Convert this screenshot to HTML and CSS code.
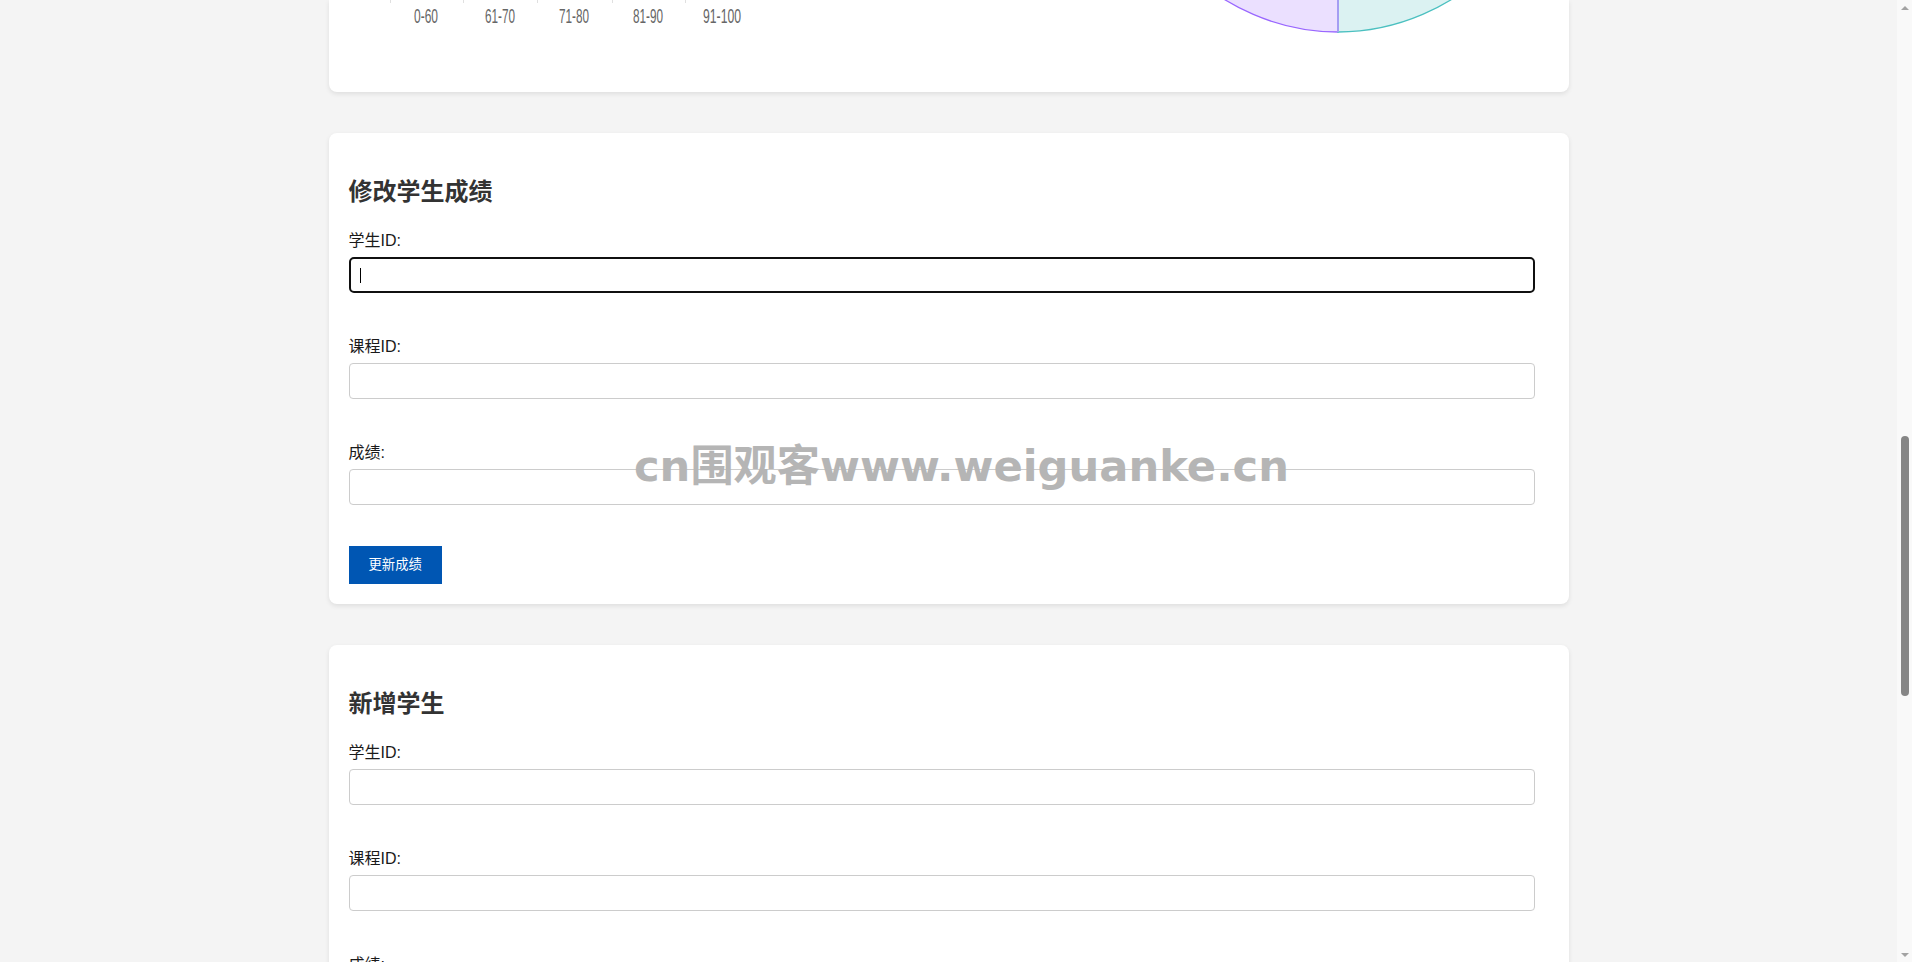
FILE: index.html
```html
<!DOCTYPE html>
<html lang="zh-CN">
<head>
<meta charset="utf-8">
<title>学生成绩管理</title>
<link rel="stylesheet" href="styles.css">
</head>
<body>
<div class="viewport">
  <main class="page">
    <section class="card card-chart">
      <svg class="chart" width="1200" height="92" viewBox="0 0 1200 92">
        <g class="ticks" stroke="rgba(0,0,0,0.12)" stroke-width="1">
          <line x1="41.5" y1="0" x2="41.5" y2="3"/>
          <line x1="114.5" y1="0" x2="114.5" y2="3"/>
          <line x1="188.5" y1="0" x2="188.5" y2="3"/>
          <line x1="263.5" y1="0" x2="263.5" y2="3"/>
          <line x1="336.5" y1="0" x2="336.5" y2="3"/>
        </g>
        <g class="axis-labels" fill="#666" font-family="Liberation Sans, Arial, sans-serif" font-size="19.5" text-anchor="middle">
          <text x="77" y="23" textLength="24" lengthAdjust="spacingAndGlyphs">0-60</text>
          <text x="151" y="23" textLength="30" lengthAdjust="spacingAndGlyphs">61-70</text>
          <text x="225" y="23" textLength="30" lengthAdjust="spacingAndGlyphs">71-80</text>
          <text x="299" y="23" textLength="30" lengthAdjust="spacingAndGlyphs">81-90</text>
          <text x="373" y="23" textLength="38" lengthAdjust="spacingAndGlyphs">91-100</text>
        </g>
        <g class="pie">
          <path d="M989 -218 L989 32 A230 250 0 0 1 759 -218 Z" fill="rgba(153,102,255,0.2)" stroke="rgb(153,102,255)" stroke-width="1.3"/>
          <path d="M989 -218 L1219 -218 A230 250 0 0 1 989 32 Z" fill="rgba(75,192,192,0.2)" stroke="rgb(75,192,192)" stroke-width="1.3"/>
          <line x1="989" y1="-218" x2="989" y2="32" stroke="#a49df3" stroke-width="2"/>
        </g>
      </svg>
    </section>

    <section class="card">
      <h2 class="card-title">修改学生成绩</h2>
      <form class="form">
        <div class="field">
          <label class="label">学生ID:</label>
          <div class="input-wrap">
            <input class="input is-focused" type="text">
            <span class="caret"></span>
          </div>
        </div>
        <div class="field">
          <label class="label">课程ID:</label>
          <div class="input-wrap"><input class="input" type="text"></div>
        </div>
        <div class="field">
          <label class="label">成绩:</label>
          <div class="input-wrap"><input class="input" type="text"></div>
        </div>
        <button class="btn" type="button">更新成绩</button>
      </form>
    </section>

    <section class="card">
      <h2 class="card-title">新增学生</h2>
      <form class="form">
        <div class="field">
          <label class="label">学生ID:</label>
          <div class="input-wrap"><input class="input" type="text"></div>
        </div>
        <div class="field">
          <label class="label">课程ID:</label>
          <div class="input-wrap"><input class="input" type="text"></div>
        </div>
        <div class="field">
          <label class="label">成绩:</label>
          <div class="input-wrap"><input class="input" type="text"></div>
        </div>
      </form>
    </section>

    <div class="watermark">
      <svg width="680" height="60" viewBox="0 0 680 60">
        <text x="0" y="41" textLength="655" lengthAdjust="spacingAndGlyphs" font-size="43" font-weight="700" fill="#b5b5b5" font-family="DejaVu Sans, Noto Sans CJK SC, sans-serif">cn围观客www.weiguanke.cn</text>
      </svg>
    </div>
  </main>

  <div class="scrollbar">
    <div class="sb-btn"><span class="arrow arrow-up"></span></div>
    <div class="sb-track"><div class="sb-thumb"></div></div>
    <div class="sb-btn"><span class="arrow arrow-down"></span></div>
  </div>
</div>
</body>
</html>
```

FILE: styles.css
```css
* {
  box-sizing: border-box;
}

html, body {
  margin: 0;
  padding: 0;
  height: 962px;
  overflow: hidden;
}

body {
  font-family: "Liberation Sans", Arial, "Noto Sans CJK SC", sans-serif;
  color: #333;
  background: #f4f4f4;
}

.viewport {
  display: flex;
  height: 962px;
}

.page {
  flex: 1;
  position: relative;
  overflow: hidden;
  height: 962px;
}

.card {
  width: 1240px;
  margin: 0 auto 41px;
  padding: 20px;
  background: #fff;
  border-radius: 8px;
  box-shadow: 0 2px 5px rgba(0, 0, 0, 0.09);
}

.card-chart {
  height: 92px;
  padding: 0 20px;
  border-radius: 0 0 8px 8px;
}

.chart {
  display: block;
  overflow: hidden;
}

.card-title {
  margin: 22px 0 21px;
  font-size: 24px;
  line-height: 34px;
  font-weight: 700;
  color: #333;
}

.form {
  display: flex;
  flex-direction: column;
  align-items: flex-start;
}

.field {
  width: 100%;
  margin-bottom: 43px;
}

.label {
  display: block;
  font-size: 16px;
  line-height: 22px;
  color: #1a1a1a;
  margin-bottom: 5px;
}

.input-wrap {
  position: relative;
  width: calc(100% - 14px);
}

.input {
  display: block;
  width: 100%;
  height: 36px;
  padding: 8px;
  font-size: 13.333px;
  line-height: 18px;
  font-family: "Liberation Sans", Arial, "Noto Sans CJK SC", sans-serif;
  border: 1px solid #ccc;
  border-radius: 4px;
  background: #fff;
  outline: none;
}

.input.is-focused {
  border: 2px solid #101010;
  border-radius: 5px;
}

.caret {
  position: absolute;
  left: 11px;
  top: 11px;
  width: 1px;
  height: 15px;
  background: #000;
}

.btn {
  margin-top: -2px;
  height: 38px;
  padding: 0 20px;
  border: none;
  border-radius: 0;
  background: #0056b3;
  color: #fff;
  font-size: 13.333px;
  line-height: 18px;
  font-family: "Liberation Sans", Arial, "Noto Sans CJK SC", sans-serif;
}

.watermark {
  position: absolute;
  left: 634px;
  top: 440px;
  pointer-events: none;
}

.watermark svg {
  display: block;
}

.scrollbar {
  width: 15px;
  height: 962px;
  background: #f9f9f9;
  display: flex;
  flex-direction: column;
}

.sb-btn {
  height: 15px;
  display: flex;
  align-items: center;
  justify-content: center;
}

.arrow {
  width: 0;
  height: 0;
  border-left: 4px solid transparent;
  border-right: 4px solid transparent;
}

.arrow-up {
  border-bottom: 4px solid #a3a3a3;
}

.arrow-down {
  border-top: 4px solid #a3a3a3;
}

.sb-track {
  flex: 1;
  display: flex;
  justify-content: center;
}

.sb-thumb {
  margin-top: 421px;
  width: 8px;
  height: 260px;
  border-radius: 4px;
  background: #868686;
}
```
